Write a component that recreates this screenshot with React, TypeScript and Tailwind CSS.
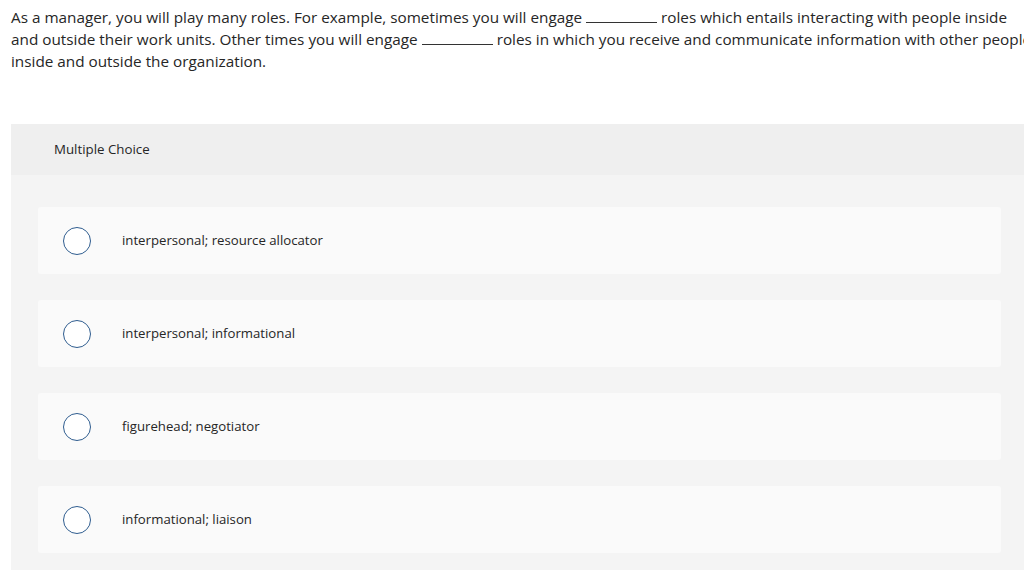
import React from "react";

const options = [
  "interpersonal; resource allocator",
  "interpersonal; informational",
  "figurehead; negotiator",
  "informational; liaison",
];

function Blank() {
  return <span className="inline-block w-[71px] border-b border-[#333] align-baseline"></span>;
}

export default function App() {
  return (
    <div className="w-[1024px] h-[570px] overflow-hidden bg-white text-[#262626] font-['Open_Sans','Noto_Sans',sans-serif]">
      <div className="pl-[11px] pt-[6px] w-[1036px] text-[15.3px] leading-[22px]">
        <p>
          As a manager, you will play many roles. For example, sometimes you will engage <Blank /> roles which entails interacting with people inside and outside their work units. Other times you will engage <Blank /> roles in which you receive and communicate information with other people inside and outside the organization.
        </p>
      </div>
      <div className="ml-[11px] mt-[52px] w-[1030px] bg-[#f4f4f4]">
        <div className="h-[51px] bg-[#efefef] pl-[43px] pt-[1px] flex items-center text-[13.3px] text-[#262626]">
          Multiple Choice
        </div>
        <div className="pl-[27px] pt-[32px] pb-[20px] flex flex-col gap-[26px] w-[990px]">
          {options.map((o) => (
            <div key={o} className="h-[67px] bg-[#fafafa] rounded-[3px] flex items-center">
              <div className="ml-[25px] w-[28px] h-[28px] rounded-full border-[1.5px] border-[#2f5d8f] bg-white shrink-0"></div>
              <div className="ml-[31px] text-[13.2px] text-[#262626]">{o}</div>
            </div>
          ))}
        </div>
      </div>
    </div>
  );
}
